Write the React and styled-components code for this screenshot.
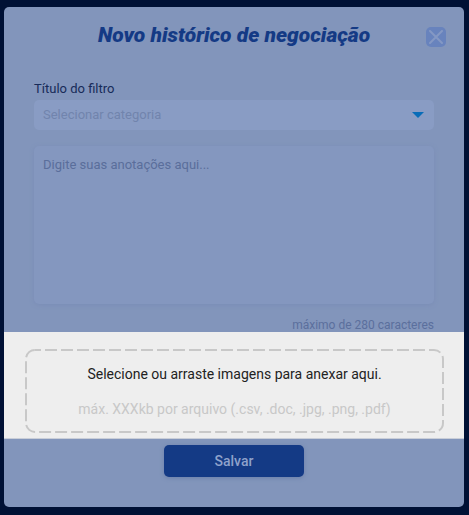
import React from "react";
import styled, { createGlobalStyle } from "styled-components";

const GlobalStyle = createGlobalStyle`
  *, *::before, *::after { box-sizing: border-box; }
  body {
    margin: 0;
    background: #001135;
    font-family: Roboto, "Liberation Sans", sans-serif;
    font-size: 14px;
    line-height: 20px;
  }
  button, input, select, textarea { font: inherit; }
`;

const Page = styled.main`
  padding: 7px 5px 8px 4px;
`;

const Dialog = styled.form`
  display: flex;
  flex-direction: column;
  background: #8295bb;
  border-radius: 5px;
`;

const Header = styled.header`
  display: grid;
  grid-template-columns: 20px 1fr 20px;
  align-items: center;
  padding: 16px 18px 0;
`;

const Title = styled.h1`
  grid-column: 2;
  margin: 0;
  color: #143a85;
  font-size: 21px;
  font-style: italic;
  font-weight: 900;
  line-height: 24px;
  text-align: center;
  white-space: nowrap;
`;

const CloseButton = styled.button`
  display: grid;
  place-items: center;
  width: 20px;
  height: 20px;
  margin-top: 4px;
  padding: 0;
  border: 0;
  border-radius: 5px;
  background: #6883bd;
  color: #8498c4;
`;

const Fields = styled.div`
  display: flex;
  flex-direction: column;
  padding: 31px 30px 0;
  font-size: 13px;
`;

const FieldLabel = styled.label`
  color: #172b59;
  line-height: 22px;
`;

const SelectBox = styled.div`
  display: grid;
  align-items: center;
  margin-bottom: 16px;

  > * { grid-area: 1 / 1; }
  > svg { justify-self: end; margin-right: 10px; pointer-events: none; }
`;

const Select = styled.select`
  appearance: none;
  width: 100%;
  height: 30px;
  padding: 0 9px;
  border: 0;
  border-radius: 5px;
  background: #899cc4;
  color: #7184ad;
`;

const Notes = styled.textarea`
  display: block;
  width: 100%;
  height: 158px;
  padding: 9px;
  border: 0;
  border-radius: 5px;
  background: #8497bf;
  box-shadow: 0 1px 4px #7a8db6;
  resize: none;

  &::placeholder { color: #5a6e9b; opacity: 1; }
`;

const Limit = styled.p`
  margin: 14px 0 0;
  color: #5b6f9d;
  font-size: 12px;
  line-height: 14px;
  text-align: right;
`;

const UploadBand = styled.section`
  padding: 17px 20px 5px 21px;
  background: #eeeeee;
  border-bottom: 1px solid #c9ced8;
`;

const DropZone = styled.label`
  position: relative;
  display: grid;
  cursor: pointer;

  > * { grid-area: 1 / 1; }
`;

const DashedOutline = styled.svg`
  position: absolute;
  inset: 0;
  width: 100%;
  height: 100%;

  rect {
    width: calc(100% - 2px);
    height: calc(100% - 2px);
  }
`;

const DropText = styled.span`
  display: flex;
  flex-direction: column;
  gap: 15px;
  padding: 15px 0 14px;
  color: #222222;
  text-align: center;
`;

const Hint = styled.span`
  color: #c8c8c8;
`;

const FileInput = styled.input`
  width: 100%;
  height: 100%;
  min-width: 0;
  opacity: 0;
`;

const Footer = styled.footer`
  display: flex;
  justify-content: center;
  padding: 6px 0 30px;
`;

const SaveButton = styled.button`
  width: 140px;
  height: 32px;
  padding: 0;
  border: 0;
  border-radius: 5px;
  background: #143a85;
  box-shadow: 0 1px 4px #6c80aa;
  color: #8fa2cb;
  font-size: 14px;
  font-weight: 500;
`;

export default function App() {
  return (
    <>
      <GlobalStyle />
      <Page>
        <Dialog onSubmit={(event) => event.preventDefault()}>
          <Header>
            <Title>Novo histórico de negociação</Title>
            <CloseButton type="button" aria-label="Fechar">
              <svg width="14" height="14" viewBox="0 0 14 14" fill="none" stroke="currentColor" strokeWidth="2" strokeLinecap="round">
                <path d="M1 1l12 12M13 1L1 13" />
              </svg>
            </CloseButton>
          </Header>
          <Fields>
            <FieldLabel htmlFor="category">Título do filtro</FieldLabel>
            <SelectBox>
              <Select id="category" defaultValue="">
                <option value="">Selecionar categoria</option>
              </Select>
              <svg width="12" height="6" viewBox="0 0 12 6" fill="#086cb8" aria-hidden="true">
                <path d="M0 0h12L6 6z" />
              </svg>
            </SelectBox>
            <Notes aria-label="Anotações" maxLength={280} placeholder="Digite suas anotações aqui..." />
            <Limit>máximo de 280 caracteres</Limit>
          </Fields>
          <UploadBand>
            <DropZone>
              <DashedOutline aria-hidden="true">
                <rect
                  x="1" y="1" rx="9" fill="none" stroke="#c8c8c8" strokeWidth="2"
                  strokeDasharray="12 4" strokeDashoffset="6"
                />
              </DashedOutline>
              <DropText>
                <span>Selecione ou arraste imagens para anexar aqui.</span>
                <Hint>máx. XXXkb por arquivo (.csv, .doc, .jpg, .png, .pdf)</Hint>
              </DropText>
              <FileInput type="file" multiple accept=".csv,.doc,.jpg,.png,.pdf" />
            </DropZone>
          </UploadBand>
          <Footer>
            <SaveButton type="submit">Salvar</SaveButton>
          </Footer>
        </Dialog>
      </Page>
    </>
  );
}
